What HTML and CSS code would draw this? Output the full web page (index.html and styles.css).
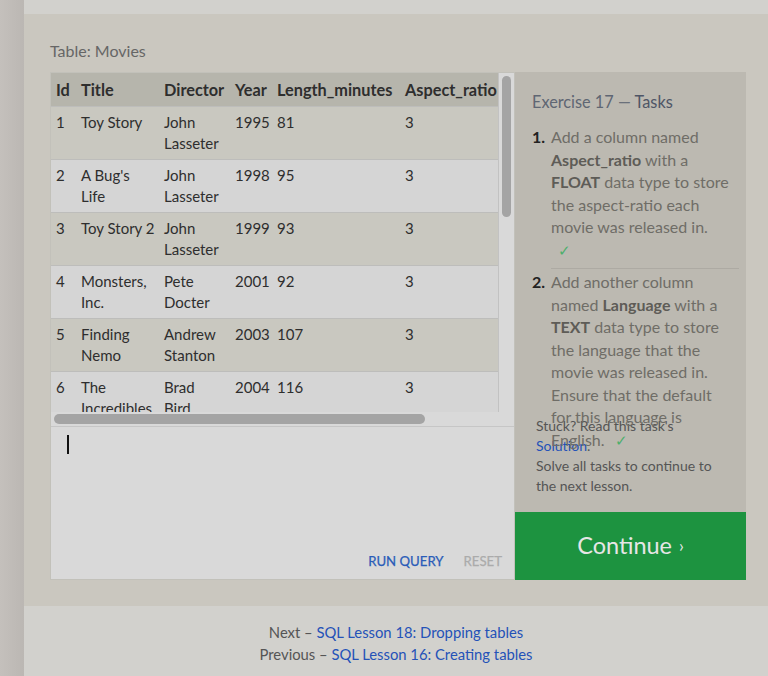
FILE: index.html
```html
<!DOCTYPE html>
<html lang="en">
<head>
<meta charset="utf-8">
<title>SQL Lesson 17</title>
<link rel="stylesheet" href="styles.css">
</head>
<body>
<div class="page">
  <div class="side-strip"></div>
  <div class="main">
    <div class="top-strip"></div>
    <section class="lesson-panel">
      <div class="table-label">Table: Movies</div>
      <div class="workspace">
        <div class="query-area">
          <div class="data">
            <div class="viewport-col">
              <div class="viewport">
                <table class="movies">
                  <colgroup>
                    <col class="c-id"><col class="c-title"><col class="c-dir"><col class="c-year"><col class="c-len"><col class="c-asp">
                  </colgroup>
                  <thead>
                    <tr><th>Id</th><th>Title</th><th>Director</th><th>Year</th><th>Length_minutes</th><th>Aspect_ratio</th></tr>
                  </thead>
                  <tbody>
                    <tr><td>1</td><td>Toy Story</td><td>John<br>Lasseter</td><td>1995</td><td>81</td><td>3</td></tr>
                    <tr><td>2</td><td>A Bug's<br>Life</td><td>John<br>Lasseter</td><td>1998</td><td>95</td><td>3</td></tr>
                    <tr><td>3</td><td>Toy Story 2</td><td>John<br>Lasseter</td><td>1999</td><td>93</td><td>3</td></tr>
                    <tr><td>4</td><td>Monsters,<br>Inc.</td><td>Pete<br>Docter</td><td>2001</td><td>92</td><td>3</td></tr>
                    <tr><td>5</td><td>Finding<br>Nemo</td><td>Andrew<br>Stanton</td><td>2003</td><td>107</td><td>3</td></tr>
                    <tr><td>6</td><td>The<br>Incredibles</td><td>Brad<br>Bird</td><td>2004</td><td>116</td><td>3</td></tr>
                  </tbody>
                </table>
              </div>
              <div class="hscroll"><div class="hthumb"></div></div>
            </div>
            <div class="vscroll"><div class="vthumb"></div></div>
          </div>
          <div class="editor">
            <div class="caret"></div>
            <div class="editor-actions">
              <span class="btn-run">RUN QUERY</span>
              <span class="btn-reset">RESET</span>
            </div>
          </div>
        </div>
        <aside class="tasks-panel">
          <div class="tasks">
            <h2 class="tasks-title">Exercise 17 <span class="dash">—</span> <span class="tasks-word">Tasks</span></h2>
            <ol class="task-list">
              <li class="task">
                <span class="num">1.</span>
                <div class="task-text">Add a column named<br><b>Aspect_ratio</b> with a<br><b>FLOAT</b> data type to store<br>the aspect-ratio each<br>movie was released in.<br><span class="check first">✓</span></div>
              </li>
              <li class="task second">
                <span class="num">2.</span>
                <div class="task-text">Add another column<br>named <b>Language</b> with a<br><b>TEXT</b> data type to store<br>the language that the<br>movie was released in.<br>Ensure that the default<br>for this language is<br>English. <span class="check">✓</span></div>
              </li>
            </ol>
          </div>
          <div class="stuck">Stuck? Read this task's<br><a class="link" href="#">Solution</a>.<br>Solve all tasks to continue to<br>the next lesson.</div>
          <div class="continue">Continue <span class="chev">›</span></div>
        </aside>
      </div>
    </section>
    <footer class="lesson-nav">
      <div>Next – <a class="link" href="#">SQL Lesson 18: Dropping tables</a></div>
      <div>Previous – <a class="link" href="#">SQL Lesson 16: Creating tables</a></div>
    </footer>
  </div>
</div>
</body>
</html>
```
FILE: styles.css
```css
html, body {
  margin: 0;
  padding: 0;
  height: 676px;
  overflow: hidden;
}
body {
  font-family: "Lato", "Open Sans", sans-serif;
  background: #d2d1cd;
  color: #333;
}
.page {
  display: flex;
  height: 676px;
}
.side-strip {
  width: 24px;
  flex: none;
  background: linear-gradient(to right, #c4c0bc, #bbb7b3);
}
.main {
  flex: 1;
  display: flex;
  flex-direction: column;
  background: #d2d1cd;
}
.top-strip {
  height: 14px;
}
.lesson-panel {
  background: #cac7bf;
  padding: 27px 22px 26px 26px;
}
.table-label {
  font-size: 16px;
  line-height: 20px;
  color: #666;
  margin-bottom: 11px;
}
.workspace {
  display: flex;
  height: 508px;
}
.query-area {
  width: 463px;
  border: 1px solid #c2c1ba;
  display: flex;
  flex-direction: column;
  background: #d9d9d9;
}
.data {
  display: flex;
  height: 353px;
  border-bottom: 1px solid #c6c6c6;
}
.viewport-col {
  width: 448px;
  display: flex;
  flex-direction: column;
}
.viewport {
  height: 339px;
  overflow: hidden;
  border-right: 1px solid #c2c2c2;
}
.movies {
  table-layout: fixed;
  width: 540px;
  border-collapse: collapse;
  font-size: 15px;
  color: #2e2e2e;
}
.c-id { width: 25px; }
.c-title { width: 83px; }
.c-dir { width: 71px; }
.c-year { width: 42px; }
.c-len { width: 128px; }
.c-asp { width: 191px; }
.movies th {
  background: #b6b5ac;
  font-weight: bold;
  font-size: 16.3px;
  text-align: left;
  height: 33px;
  padding: 0 5px;
  line-height: 20px;
  white-space: nowrap;
  overflow: hidden;
}
.movies td {
  padding: 5px 5px 5px 5px;
  line-height: 21px;
  vertical-align: top;
  white-space: nowrap;
  overflow: hidden;
  height: 42px;
  border-top: 1px solid #bdbdbb;
}
.movies tbody tr:nth-child(odd) td { background: #c9c8c0; }
.movies tbody tr:nth-child(even) td { background: #d5d5d5; }
.hscroll {
  height: 14px;
  box-sizing: border-box;
  padding: 2px 0 0 3px;
}
.hthumb {
  width: 371px;
  height: 10px;
  border-radius: 5px;
  background: #a4a4a4;
}
.vscroll {
  width: 15px;
  box-sizing: border-box;
  padding: 3px 0 0 3px;
}
.vthumb {
  width: 9px;
  height: 141px;
  border-radius: 5px;
  background: #a4a4a4;
}
.editor {
  flex: 1;
  display: flex;
  flex-direction: column;
  padding: 8px 12px 8px 16px;
}
.caret {
  width: 2px;
  height: 19px;
  background: #111;
}
.editor-actions {
  margin-top: auto;
  display: flex;
  justify-content: flex-end;
  gap: 20px;
  font-size: 13.2px;
  line-height: 20px;
  font-weight: normal;
  -webkit-text-stroke: 0.25px currentColor;
}
.btn-run { color: #2a5cb8; }
.btn-reset { color: #ababab; }
.tasks-panel {
  width: 231px;
  background: #bcb9b1;
  display: flex;
  flex-direction: column;
}
.tasks {
  flex: 1 1 0;
  min-height: 0;
  overflow: visible;
  padding: 19px 7px 0 17px;
}
.tasks-title {
  margin: 0;
  font-size: 16.3px;
  line-height: 22px;
  font-weight: normal;
  color: #5f6673;
}
.tasks-word { color: #4e5566; }
.dash { color: #6a707a; }
.task-list {
  list-style: none;
  margin: 13px 0 0 0;
  padding: 0;
}
.task {
  display: flex;
  font-size: 16px;
  line-height: 22.5px;
  color: #6f6d67;
}
.task.second {
  margin-top: 7px;
  padding-top: 3px;
  position: relative;
}
.task.second::before {
  content: "";
  position: absolute;
  top: 0;
  left: 19px;
  right: 0;
  border-top: 1px solid #adaaa3;
}
.num {
  width: 19px;
  flex: none;
  font-weight: bold;
  color: #222;
}
.task-text {
  white-space: nowrap;
}
.task-text b { color: #5e5c57; }
.check {
  color: #4caf6c;
  font-size: 15px;
  margin-left: 6px;
}
.check.first { margin-left: 7px; }
.stuck {
  padding: 0 10px 16px 21px;
  font-size: 14px;
  line-height: 20px;
  color: #555;
  white-space: nowrap;
}
.link {
  color: #2452b8;
  text-decoration: none;
}
.continue {
  height: 68px;
  box-sizing: border-box;
  padding-bottom: 2px;
  background: #1d9340;
  color: #e6e6e6;
  font-size: 23.5px;
  display: flex;
  align-items: center;
  justify-content: center;
  gap: 7px;
}
.chev { font-size: 17px; }
.lesson-nav {
  flex: 1;
  padding-top: 15px;
  text-align: center;
  font-size: 14.8px;
  line-height: 22px;
  color: #555;
}
```
